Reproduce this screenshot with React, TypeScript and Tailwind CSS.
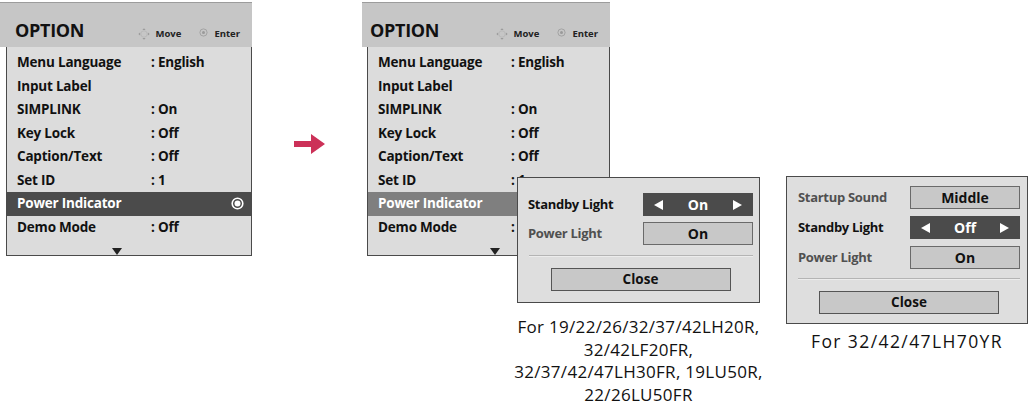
import React from 'react';

const rows: { label: string; value?: string }[] = [
  { label: 'Menu Language', value: ': English' },
  { label: 'Input Label' },
  { label: 'SIMPLINK', value: ': On' },
  { label: 'Key Lock', value: ': Off' },
  { label: 'Caption/Text', value: ': Off' },
  { label: 'Set ID', value: ': 1' },
  { label: 'Power Indicator' },
  { label: 'Demo Mode', value: ': Off' },
];

function MoveIcon() {
  return (
    <svg width="12" height="12" viewBox="0 0 12 12" className="self-center">
      <circle cx="6" cy="6" r="3.2" fill="none" stroke="#b5b5b5" strokeWidth="0.8" />
      <path d="M6 0.3 L7.6 2.1 H4.4 Z" fill="#9a9a9a" />
      <path d="M6 11.7 L7.6 9.9 H4.4 Z" fill="#9a9a9a" />
      <path d="M0.3 6 L2.1 4.4 V7.6 Z" fill="#9a9a9a" />
      <path d="M11.7 6 L9.9 4.4 V7.6 Z" fill="#9a9a9a" />
    </svg>
  );
}

function EnterIcon() {
  return (
    <svg width="9" height="9" viewBox="0 0 9 9" className="self-center">
      <circle cx="4.5" cy="4.5" r="3.6" fill="none" stroke="#9a9a9a" strokeWidth="0.8" />
      <circle cx="4.5" cy="4.5" r="1.5" fill="#9a9a9a" />
    </svg>
  );
}

function RadioIcon() {
  return (
    <svg width="13" height="13" viewBox="0 0 13 13">
      <circle cx="6.5" cy="6.5" r="5.3" fill="none" stroke="#fff" strokeWidth="1.6" />
      <circle cx="6.5" cy="6.5" r="3" fill="#fff" />
    </svg>
  );
}

function OptionPanel({
  width,
  headPad,
  bodyInset,
  valueCol,
  arrowLeft,
  dim,
}: {
  width: string;
  headPad: string;
  bodyInset: string;
  valueCol: string;
  arrowLeft: string;
  dim?: boolean;
}) {
  return (
    <div className={`${width} pt-[2px] font-['Open_Sans',sans-serif]`}>
      <div className={`flex h-[45px] items-baseline border-t border-[#9c9c9c] bg-[#c6c6c6] pt-[18px] pr-[12px] ${headPad}`}>
        <span className="text-[18px] leading-[18px] font-bold tracking-[-0.3px] text-[#111]">OPTION</span>
        <div className="ml-auto flex items-baseline gap-[6px] text-[9.5px] leading-[10px] font-bold text-[#222]">
          <MoveIcon />
          <span>Move</span>
          <span className="ml-[12px] flex"><EnterIcon /></span>
          <span>Enter</span>
        </div>
      </div>
      <div className={`${bodyInset} border-x border-b border-[#4a4a4a] bg-[#dcdcdc] pt-[4px]`}>
        {rows.map((r) => {
          const sel = r.label === 'Power Indicator';
          return (
            <div
              key={r.label}
              className={`grid h-[23.5px] items-center pl-[10px] pr-[7px] text-[13.5px] leading-[23.5px] font-bold tracking-[-0.2px] ${valueCol} ${
                sel ? (dim ? 'bg-[#7f7f7f] text-white' : 'bg-[#4b4b4b] text-white') : 'text-[#111]'
              }`}
            >
              <span>{r.label}</span>
              <span className="flex items-center">
                {r.value}
                {sel && !dim && (
                  <span className="ml-auto flex">
                    <RadioIcon />
                  </span>
                )}
              </span>
            </div>
          );
        })}
        <div className="h-[16px] pt-[9px]">
          <div
            className={`${arrowLeft} h-0 w-0 border-x-[5px] border-t-[7px] border-x-transparent border-t-[#222]`}
          />
        </div>
      </div>
    </div>
  );
}

function DarkBox({ text }: { text: string }) {
  return (
    <div className="flex h-full items-center justify-between bg-[#4b4b4b] px-[11px] text-white">
      <span className="h-0 w-0 border-y-[5px] border-r-[9px] border-y-transparent border-r-white" />
      <span className="text-[14px] font-bold">{text}</span>
      <span className="h-0 w-0 border-y-[5px] border-l-[9px] border-y-transparent border-l-white" />
    </div>
  );
}

function LightBox({ text }: { text: string }) {
  return (
    <div className="flex h-full items-center justify-center border border-[#6a6a6a] bg-[#c8c8c8] text-[14px] font-bold text-[#111]">
      {text}
    </div>
  );
}

function PopRow({ label, active, children }: { label: string; active?: boolean; children: React.ReactNode }) {
  return (
    <div className="flex h-[23px] items-center">
      <span className={`flex-1 text-[13px] font-bold tracking-[-0.3px] ${active ? 'text-[#111]' : 'text-[#505050]'}`}>{label}</span>
      <div className="h-full w-[110px]">{children}</div>
    </div>
  );
}

function Separator() {
  return <div className="h-[2px] border-t border-[#b4b4b4] bg-[#ececec]" />;
}

function CloseButton() {
  return (
    <div className="flex h-[23px] w-[180px] items-center justify-center border border-[#555] bg-[#c8c8c8] text-[13.5px] font-bold text-[#111]">
      Close
    </div>
  );
}

export default function App() {
  return (
    <div className="flex h-[407px] w-[1030px] overflow-hidden bg-white">
      <OptionPanel
        width="w-[252px]"
        headPad="pl-[15px]"
        bodyInset="ml-[6px]"
        valueCol="grid-cols-[134px_1fr]"
        arrowLeft="ml-[105px]"
      />

      <svg width="31" height="20" viewBox="0 0 31 20" className="mt-[134px] ml-[42px] shrink-0">
        <path d="M0 7 H17 V0 L31 10 L17 20 V13 H0 Z" fill="#cc3158" />
      </svg>

      <div className="relative ml-[37px] shrink-0">
        <OptionPanel
          width="w-[248px]"
          headPad="pl-[8px]"
          bodyInset="ml-[5px]"
          valueCol="grid-cols-[133px_1fr]"
          arrowLeft="ml-[122px]"
          dim
        />
        <div className="absolute top-[177px] left-[155px] flex w-[243px] flex-col items-center font-['Open_Sans',sans-serif]">
          <div className="flex w-full flex-col border border-[#4a4a4a] bg-[#dedede] pt-[15px] pr-[6px] pb-[11px] pl-[10px]">
            <div className="flex flex-col gap-[6px]">
              <PopRow label="Standby Light" active>
                <DarkBox text="On" />
              </PopRow>
              <PopRow label="Power Light">
                <LightBox text="On" />
              </PopRow>
            </div>
            <div className="mt-[10px] ml-[1px]">
              <Separator />
            </div>
            <div className="mt-[11px] flex justify-center">
              <CloseButton />
            </div>
          </div>
          <div className="mt-[13px] flex flex-col items-center text-[17px] leading-[22.5px] tracking-[0.3px] whitespace-nowrap text-[#111]">
            <span>For 19/22/26/32/37/42LH20R,</span>
            <span>32/42LF20FR,</span>
            <span>32/37/42/47LH30FR, 19LU50R,</span>
            <span>22/26LU50FR</span>
          </div>
        </div>
      </div>

      <div className="mt-[176px] ml-[176px] flex w-[242px] shrink-0 flex-col items-center font-['Open_Sans',sans-serif]">
        <div className="flex w-full flex-col border border-[#4a4a4a] bg-[#dedede] pt-[9px] pr-[7px] pb-[9px] pl-[11px]">
          <div className="flex flex-col gap-[7px]">
            <PopRow label="Startup Sound">
              <LightBox text="Middle" />
            </PopRow>
            <PopRow label="Standby Light" active>
              <DarkBox text="Off" />
            </PopRow>
            <PopRow label="Power Light">
              <LightBox text="On" />
            </PopRow>
          </div>
          <div className="mt-[9px]">
            <Separator />
          </div>
          <div className="mt-[11px] flex justify-center">
            <CloseButton />
          </div>
        </div>
        <div className="mt-[6px] text-[17.5px] leading-[22.5px] tracking-[1.4px] whitespace-nowrap text-[#111]">For 32/42/47LH70YR</div>
      </div>
    </div>
  );
}
